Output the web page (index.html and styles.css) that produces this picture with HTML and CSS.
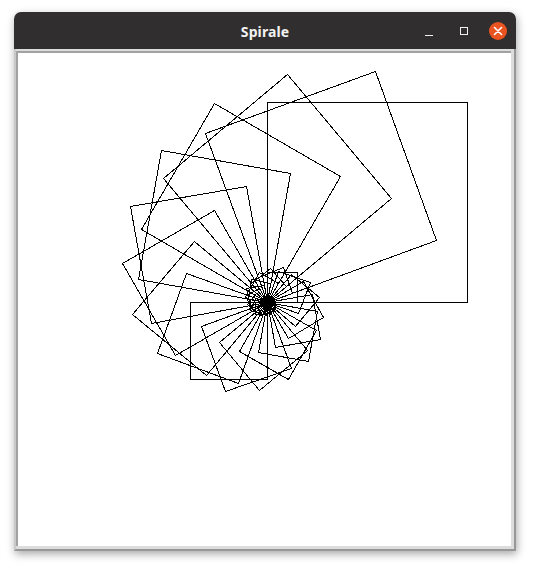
FILE: index.html
```html
<!DOCTYPE html>
<html lang="it">
<head>
<meta charset="utf-8">
<title>Spirale</title>
<link rel="stylesheet" href="styles.css">
</head>
<body>
<div class="window">
  <div class="titlebar">
    <span class="title">Spirale</span>
    <div class="controls">
      <span class="btn btn-min"></span>
      <span class="btn btn-max"></span>
      <span class="btn btn-close">
        <svg width="18" height="18" viewBox="0 0 18 18"><path d="M5.5 5.5 L12.5 12.5 M12.5 5.5 L5.5 12.5" stroke="#fff" stroke-width="1.6" stroke-linecap="round" fill="none"/></svg>
      </span>
    </div>
  </div>
  <div class="frame">
    <div class="canvas">
      <svg id="spiral" class="spiral" width="493" height="493" viewBox="0 0 493 493"></svg>
    </div>
  </div>
</div>
<script src="script.js"></script>
</body>
</html>
```

FILE: styles.css
```css
html, body {
  margin: 0;
  padding: 0;
  background: #ffffff;
}
body {
  width: 534px;
  height: 569px;
  overflow: hidden;
  font-family: "Noto Sans", "Open Sans", sans-serif;
}
.window {
  margin: 12px 0 0 14px;
  width: 502px;
  border-radius: 7px 7px 0 0;
  box-shadow: 1px 3px 9px rgba(0, 0, 0, 0.35);
}
.titlebar {
  position: relative;
  height: 37px;
  background: #302e2e;
  border-radius: 7px 7px 0 0;
  display: flex;
  align-items: center;
  justify-content: center;
}
.title {
  color: #f2f2f2;
  font-weight: 700;
  font-size: 14px;
  letter-spacing: 0.1px;
  margin-top: 1px;
}
.controls {
  position: absolute;
  right: 9px;
  top: 10px;
  display: flex;
  align-items: center;
  gap: 0;
}
.btn {
  display: block;
}
.btn-min {
  width: 8px;
  height: 1px;
  background: #f0f0f0;
  margin: 8px 27px 0 0;
}
.btn-max {
  width: 6px;
  height: 6px;
  border: 1px solid #f0f0f0;
  margin: 0 21px 0 0;
}
.btn-close {
  width: 18px;
  height: 18px;
  border-radius: 50%;
  background: #e95420;
}
.btn-close svg {
  display: block;
}
.frame {
  background: #dcdcdc;
  border-left: 2px solid #c9c9c9;
  border-right: 2px solid #979797;
  border-bottom: 2px solid #979797;
  padding: 2px 3px 3px 0;
}
.canvas {
  width: 493px;
  height: 493px;
  background: #ffffff;
  border-top: 2px solid #a2a2a2;
  border-left: 2px solid #a2a2a2;
}
.spiral {
  display: block;
}
.spiral polygon {
  fill: none;
  stroke: #000000;
  stroke-width: 1;
  shape-rendering: crispEdges;
}
```

FILE: script.js
```js
(function () {
  var svg = document.getElementById('spiral');
  var ns = 'http://www.w3.org/2000/svg';
  var cx = 249, cy = 249;
  var s = 200;
  for (var n = 0; n < 60; n++) {
    var t = -20 * n * Math.PI / 180;
    var ux = Math.cos(t), uy = Math.sin(t);
    var vx = Math.sin(t), vy = -Math.cos(t);
    var corners = [[0, 0], [ux, uy], [ux + vx, uy + vy], [vx, vy]];
    var pts = corners.map(function (c) {
      var x = Math.round(cx + s * c[0]) + 0.5;
      var y = Math.round(cy + s * c[1]) + 0.5;
      return x + ',' + y;
    }).join(' ');
    var poly = document.createElementNS(ns, 'polygon');
    poly.setAttribute('points', pts);
    svg.appendChild(poly);
    s *= 0.9;
  }
})();
```
